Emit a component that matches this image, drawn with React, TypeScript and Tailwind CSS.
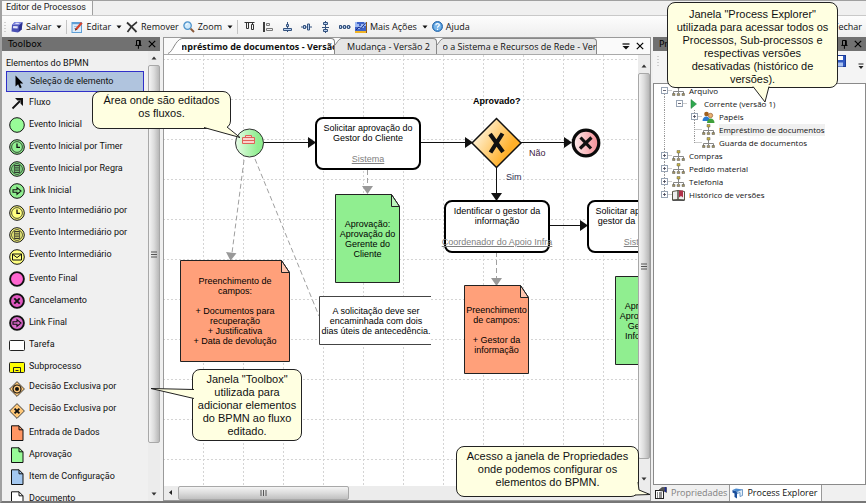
import type { ReactNode } from "react";
import clsx from "clsx";

/* ---------- small shared pieces ---------- */

const Caret = () => (
  <svg width="6" height="4" viewBox="0 0 6 4" className="shrink-0">
    <path d="M0.5 0.5h5L3 3.5z" fill="#111" />
  </svg>
);

const PinIcon = () => (
  <svg width="7" height="9" viewBox="0 0 7 9">
    <path d="M1.5 0.5h3.6v4.5M1.5 0.5v4.5M0.3 5.4h6.2M3.4 5.4v3.4" stroke="#000" fill="none" />
    <path d="M4 0.5h1.6v5H4z" fill="#000" />
  </svg>
);

const CloseIcon = () => (
  <svg width="8" height="8" viewBox="0 0 8 8">
    <path d="M0.8 0.8l6.4 6.4M7.2 0.8L0.8 7.2" stroke="#000" strokeWidth="1.2" />
  </svg>
);

const PanelHeader = ({ title }: { title: string }) => (
  <header className="flex h-3.5 shrink-0 items-center bg-[#717171] pr-1 pl-1.5">
    <h2 className="flex-1 font-['DejaVu_Sans'] text-[9px] leading-3 text-black">{title}</h2>
    <div className="flex items-center gap-1.5">
      <button aria-label={`Fixar ${title}`}>
        <PinIcon />
      </button>
      <button aria-label={`Fechar ${title}`}>
        <CloseIcon />
      </button>
    </div>
  </header>
);

const VerticalScroll = ({ thumb, className }: { thumb: string; className?: string }) => (
  <div className={clsx("flex w-3 shrink-0 flex-col items-center bg-[#ececec]", className)}>
    <svg width="6" height="14" viewBox="0 0 6 14" className="shrink-0">
      <path d="M0.5 8.5h5L3 5.5z" fill="#333" />
    </svg>
    <div
      className={clsx(
        "flex w-full items-center justify-center rounded-xs border border-[#a8a8a8] bg-linear-to-r from-[#f4f4f4] via-[#dcdcdc] to-[#b8b8b8]",
        thumb
      )}
    >
      <svg width="6" height="7" viewBox="0 0 6 7">
        <path d="M0 1h6M0 3.5h6M0 6h6" stroke="#555" />
      </svg>
    </div>
    <div className="flex-1" />
    <svg width="6" height="14" viewBox="0 0 6 14" className="shrink-0">
      <path d="M0.5 5.5h5L3 8.5z" fill="#333" />
    </svg>
  </div>
);

/* ---------- main toolbar ---------- */

const SaveIcon = () => (
  <svg width="12" height="12" viewBox="0 0 12 12">
    <path d="M3.5 1l8 0.3-0.8 7L7 11.5 0.5 10.5 1 4z" fill="#4a50b4" />
    <path d="M3.5 1l8 0.3-3.2 2.9L1 4z" fill="#8288dc" />
    <path d="M8.3 4.2l3.2-2.9-0.8 7L7.6 11.2z" fill="#2c3190" />
    <path d="M2.2 5l4.6 0.2-0.2 2.3-4.6-0.2z" fill="#e6e8fa" />
    <path d="M5 1.8l3.6 0.1-1.2 1.1-3.4-0.1z" fill="#dfe2fa" />
  </svg>
);

const EditIcon = () => (
  <svg width="12" height="12" viewBox="0 0 12 12">
    <rect x="1" y="1.5" width="9.5" height="10" fill="#dcecfa" stroke="#5f9fd6" />
    <rect x="1" y="1" width="9.5" height="2.2" fill="#5f9fd6" />
    <path d="M3 5.5h4M3 7.5h3" stroke="#9bbfe0" />
    <path d="M4 9.5l0.6-2.2L9.8 1l1.8 1.6-5.4 6.2z" fill="#d8452e" />
    <path d="M4 9.5l0.6-2.2 1.6 1.5z" fill="#5a2f1c" />
  </svg>
);

const RemoveIcon = () => (
  <svg width="12" height="12" viewBox="0 0 12 12">
    <path d="M1 1.5c3 2.6 6 6 9.5 9.5" stroke="#333" strokeWidth="1.9" fill="none" />
    <path d="M11 1C7 3.6 4 7 1.5 11" stroke="#333" strokeWidth="1.6" fill="none" />
  </svg>
);

const ZoomIcon = () => (
  <svg width="12" height="12" viewBox="0 0 12 12">
    <circle cx="4.6" cy="4.6" r="3.7" fill="#cfe9fb" stroke="#4e93cb" strokeWidth="1.3" />
    <path d="M7.6 7.6l3.4 3.4" stroke="#8a5a3a" strokeWidth="2" />
    <path d="M2.8 4.2c0.3-1 1-1.5 2-1.6" stroke="#fff" fill="none" />
  </svg>
);

const ChartIcon = () => (
  <svg width="12" height="12" viewBox="0 0 12 12">
    <rect x="0" y="1" width="12" height="9" fill="#3f63c8" />
    <path d="M0 1h2v2h2v2h2V3h3V1h3v4H9v2H6v1H3V6H0z" fill="#9db8f0" />
    <path d="M1 9l3-3 2 1.5L10.5 2" stroke="#1b2f86" fill="none" />
    <rect x="0" y="10" width="12" height="2" fill="#f0b428" />
    <path d="M11.5 1v11" stroke="#8a5a1e" />
  </svg>
);

const HelpIcon = () => (
  <svg width="11" height="11" viewBox="0 0 11 11">
    <circle cx="5.5" cy="5.5" r="5" fill="#4a92d6" stroke="#2f6cab" />
    <circle cx="5.5" cy="5.5" r="3.7" fill="#79b6ea" />
    <path d="M3.8 4.3c0-2.2 3.5-2.1 3.5-0.2 0 1.3-1.8 1.2-1.8 2.6M5.5 7.7v1.2" stroke="#fff" strokeWidth="1.2" fill="none" />
  </svg>
);

const alignTools: { label: string; icon: ReactNode }[] = [
  {
    label: "Alinhar ao topo",
    icon: <path d="M0.5 1.500h10M2.500 1.500v6h2v-6M7.500 3.500h2v5h-2zM8.500 1.500v2" stroke="#333" fill="none" />,
  },
  {
    label: "Alinhar à esquerda",
    icon: (
      <>
        <path d="M1 1v10" stroke="#111" strokeWidth="1.6" />
        <path d="M3.500 2.500h3v2h-3zM3.500 7.500h6v2h-6z" stroke="#777" fill="#eee" />
      </>
    ),
  },
  {
    label: "Centralizar na vertical",
    icon: (
      <>
        <path d="M5.500 1v10" stroke="#34527e" />
        <path d="M4.500 3.500h2v2h-2zM1.500 7.500h8v2h-8z" stroke="#34527e" fill="#b8d0f0" />
      </>
    ),
  },
  {
    label: "Centralizar na horizontal",
    icon: (
      <>
        <path d="M0 6h11" stroke="#34527e" />
        <path d="M2.500 4.500h2v3h-2zM6.500 3h2v6h-2z" stroke="#34527e" fill="#b8d0f0" />
      </>
    ),
  },
  {
    label: "Distribuir na vertical",
    icon: (
      <>
        <path d="M5.500 0v12M2 6.500h7" stroke="#34527e" />
        <path d="M3.500 1.500h4v2h-4zM3.500 8.500h4v2h-4z" stroke="#34527e" fill="#b8d0f0" />
      </>
    ),
  },
  {
    label: "Distribuir na horizontal",
    icon: (
      <>
        <path d="M0 6h12" stroke="#34527e" />
        <path d="M0.500 4.500h2v3h-2zM4.500 4.500h2v3h-2zM8.500 4.500h2v3h-2z" stroke="#34527e" fill="#b8d0f0" />
      </>
    ),
  },
];

const ToolButton = ({ icon, label, menu }: { icon: ReactNode; label: string; menu?: boolean }) => (
  <button className="flex items-center gap-[3px] whitespace-nowrap">
    {icon}
    {label}
    {menu && (
      <span className="ml-0.5">
        <Caret />
      </span>
    )}
  </button>
);

const Divider = () => <span className="h-3.5 w-px bg-[#c4c4c4]" />;

const MainToolbar = () => (
  <div className="flex h-[22px] shrink-0 items-center gap-1 border-t border-[#c9c9c9] bg-linear-to-b from-[#fdfdfd] to-[#eeeeee] pr-1 pl-0.5 font-['Open_Sans'] text-[9px] text-[#111]">
    <svg width="3" height="12" viewBox="0 0 3 12">
      <path d="M1 1v11" stroke="#aaa" strokeDasharray="1 2" />
    </svg>
    <ToolButton icon={<SaveIcon />} label="Salvar" menu />
    <Divider />
    <ToolButton icon={<EditIcon />} label="Editar" menu />
    <ToolButton icon={<RemoveIcon />} label="Remover" />
    <ToolButton icon={<ZoomIcon />} label="Zoom" menu />
    <Divider />
    <div className="flex gap-[7px] pl-0.5">
      {alignTools.map(({ label, icon }) => (
        <button key={label} aria-label={label}>
          <svg width="12" height="12" viewBox="0 0 12 12">
            {icon}
          </svg>
        </button>
      ))}
    </div>
    <ToolButton icon={<ChartIcon />} label="Mais Ações" menu />
    <ToolButton icon={<HelpIcon />} label="Ajuda" />
    <button className="ml-auto">Fechar</button>
  </div>
);

/* ---------- toolbox ---------- */

const EventIcon = ({ fill, ring, thick, children }: { fill: string; ring?: boolean; thick?: boolean; children?: ReactNode }) => (
  <>
    <circle cx="8" cy="8" r={thick ? 6.9 : 7.3} fill={fill} stroke="#111" strokeWidth={thick ? 1.9 : 1} />
    {ring && <circle cx="8" cy="8" r="5.4" fill="none" stroke="#222" strokeWidth="0.8" />}
    {children}
  </>
);

const Clock = () => <path d="M8 4.5V8.4h3" stroke="#111" strokeWidth="1.3" fill="none" />;

const Lines = () => (
  <path d="M5.3 4.5h5.4v7H5.3zM6 6.2h4M6 8h4M6 9.8h4" stroke="#222" strokeWidth="0.9" fill="none" />
);

const LinkArrow = () => (
  <path d="M4 6.7h4V4.6L12 8l-4 3.4V9.3H4z" stroke="#111" strokeWidth="1.1" fill="none" />
);

const Sheet = ({ fill }: { fill: string }) => (
  <>
    <path d="M2.5 0.8h7.5l4 4v10.7H2.5z" fill={fill} stroke="#111" />
    <path d="M10 0.8v4h4" fill="none" stroke="#111" />
  </>
);

const Rhombus = () => <path d="M8 0.6L15.4 8 8 15.4 0.6 8z" fill="#ffc878" stroke="#444" />;

type ToolItem = { label: string; icon: ReactNode; clipped?: boolean };

const tools: ToolItem[] = [
  {
    label: "Fluxo",
    icon: (
      <>
        <path d="M3.500 13.500L11 6" stroke="#111" strokeWidth="1.800" />
        <path d="M6 3h8v8l-2.500-2.500V5.500H8.500z" fill="#111" />
      </>
    ),
  },
  { label: "Evento Inicial", icon: <EventIcon fill="#98fb98" /> },
  { label: "Evento Inicial por Timer", icon: <EventIcon fill="#90ee90" ring><Clock /></EventIcon> },
  { label: "Evento Inicial por Regra", icon: <EventIcon fill="#90ee90" ring><Lines /></EventIcon> },
  { label: "Link Inicial", icon: <EventIcon fill="#90ee90"><LinkArrow /></EventIcon> },
  { label: "Evento Intermediário por", icon: <EventIcon fill="#ffff80" ring><Clock /></EventIcon>, clipped: true },
  { label: "Evento Intermediário por", icon: <EventIcon fill="#ffff80" ring><Lines /></EventIcon>, clipped: true },
  {
    label: "Evento Intermediário",
    icon: (
      <EventIcon fill="#ffff80">
        <path d="M3.500 5h9v6h-9zM3.500 5.200L8 8.600l4.500-3.400" stroke="#111" fill="none" />
      </EventIcon>
    ),
    clipped: true,
  },
  { label: "Evento Final", icon: <EventIcon fill="#ff66d0" thick /> },
  {
    label: "Cancelamento",
    icon: (
      <EventIcon fill="#e058c0" thick>
        <path d="M5.3 5.3l5.4 5.4M10.7 5.3l-5.4 5.4" stroke="#111" strokeWidth="1.9" />
      </EventIcon>
    ),
  },
  { label: "Link Final", icon: <EventIcon fill="#d868c8" thick><LinkArrow /></EventIcon> },
  { label: "Tarefa", icon: <rect x="0.5" y="3.5" width="15" height="10" rx="1" fill="#fff" stroke="#222" /> },
  {
    label: "Subprocesso",
    icon: (
      <>
        <rect x="0.500" y="3.500" width="15" height="10" rx="1" fill="#ffff00" stroke="#222" />
        <path d="M4.500 13.500v-5h7v5M6.500 11.500h3" fill="none" stroke="#222" />
      </>
    ),
  },
  {
    label: "Decisão Exclusiva por",
    icon: (
      <>
        <Rhombus />
        <circle cx="8" cy="8" r="4" fill="none" stroke="#111" strokeWidth="1.2" />
        <circle cx="8" cy="8" r="2" fill="#111" />
      </>
    ),
    clipped: true,
  },
  {
    label: "Decisão Exclusiva por",
    icon: (
      <>
        <Rhombus />
        <path d="M5.6 5.6l4.8 4.8M10.4 5.6l-4.8 4.8" stroke="#111" strokeWidth="1.9" />
      </>
    ),
    clipped: true,
  },
  { label: "Entrada de Dados", icon: <Sheet fill="#ff9664" /> },
  { label: "Aprovação", icon: <Sheet fill="#98fb98" /> },
  { label: "Item de Configuração", icon: <Sheet fill="#a4c8f0" /> },
  { label: "Documento", icon: <Sheet fill="#fff" /> },
];

const Toolbox = () => (
  <aside className="flex w-[158px] shrink-0 flex-col overflow-hidden">
    <PanelHeader title="Toolbox" />
    <div className="flex min-h-0 flex-1">
      <div className="min-w-0 flex-1 overflow-hidden pl-1 font-['Roboto'] text-[9px] text-[#111]">
        <h3 className="h-5 pt-1.5 leading-3">Elementos do BPMN</h3>
        <button className="flex h-[21px] w-[138px] items-center gap-1.5 border border-[#3030c8] bg-[#b0c4de] pl-1.5">
          <svg width="11" height="14" viewBox="0 0 11 14">
            <path d="M2.5 0.5v11l2.6-2.3 1.8 4 1.8-0.9-1.8-3.8h3.3z" fill="#000" />
          </svg>
          Seleção de elemento
        </button>
        {tools.map(({ label, icon, clipped }, i) => (
          <button key={i} className="flex h-[22px] w-full items-center gap-1 pl-[3px] whitespace-nowrap">
            <svg width="16" height="16" viewBox="0 0 16 16" className="shrink-0">
              {icon}
            </svg>
            <span className={clsx(clipped && "pb-1")}>{label}</span>
          </button>
        ))}
      </div>
      <VerticalScroll thumb="h-[378px]" />
    </div>
  </aside>
);

/* ---------- diagram ---------- */

const Task = ({ place, lines, role }: { place: string; lines: string[]; role: string }) => (
  <div
    className={clsx(
      "absolute flex h-[53px] w-[106px] flex-col items-center justify-between rounded-lg border-2 border-black bg-white pt-1 pb-1 whitespace-nowrap",
      place
    )}
  >
    <p>
      {lines.map((line) => (
        <span key={line} className="block">
          {line}
        </span>
      ))}
    </p>
    <a href="#papel" className="text-[#808080] underline">
      {role}
    </a>
  </div>
);

const Note = ({ place, lines, w, h, fill }: { place: string; lines: string[]; w: number; h: number; fill: string }) => (
  <div className={clsx("absolute", place)}>
    <svg width={w} height={h} viewBox={`0 0 ${w} ${h}`} className="absolute inset-0">
      <path d={`M0.5 0.5H${w - 8.5}L${w - 0.5} 12.5V${h - 0.5}H0.5z`} fill={fill} stroke="#222" />
      <path d={`M${w - 8.5} 0.5V12.5H${w - 0.5}z`} fill="#fff" fillOpacity="0.4" stroke="#222" />
    </svg>
    <p className="relative flex h-full flex-col items-center justify-center whitespace-nowrap">
      {lines.map((line, i) => (
        <span key={i} className="block h-2.5">
          {line}
        </span>
      ))}
    </p>
  </div>
);

const Connectors = () => (
  <svg width="473" height="431" viewBox="164 55 473 431" className="absolute top-0 left-0">
    <defs>
      <pattern id="grid" x="203" y="59" width="40" height="40" patternUnits="userSpaceOnUse">
        <path d="M0.5 0v40M0 0.5h40" stroke="#d4d4d4" strokeDasharray="2 2" />
      </pattern>
      <linearGradient id="amber" x1="0" y1="0.2" x2="1" y2="0.8">
        <stop offset="0.1" stopColor="#fff3d8" />
        <stop offset="0.75" stopColor="#ffb02a" />
      </linearGradient>
      <linearGradient id="mint">
        <stop offset="0" stopColor="#e8fbe8" />
        <stop offset="0.8" stopColor="#90ee90" />
      </linearGradient>
      <linearGradient id="rose">
        <stop offset="0" stopColor="#fdeeee" />
        <stop offset="1" stopColor="#f58c94" />
      </linearGradient>
    </defs>
    <rect x="164" y="55" width="473" height="431" fill="url(#grid)" />
    <g stroke="#111" fill="none">
      <path d="M264 142.5h44M420 142.5h46M520 142.5h45M496.5 167v27M549 225.5h32" />
    </g>
    <g fill="#111">
      <path d="M308 137v11l8-5.5zM465 137v11l8-5.5zM564 137v11l8-5.5zM491 193h11l-5.5 8zM580 220v11l8-5.5z" />
    </g>
    <g stroke="#a0a0a0" fill="none" strokeDasharray="5 3">
      <path d="M244 160L232 253M255 159L319 316M367.5 170v17M496.5 252v27" />
    </g>
    <g fill="#999">
      <path d="M226 252l10.5 1.2-6 7.5zM362 186h11l-5.5 8zM491 278h11l-5.5 8z" />
    </g>
    <circle cx="249.5" cy="143" r="14" fill="url(#mint)" stroke="#333" />
    <path d="M242.500 137.500h12v6h-12zM245.500 137.500v-2h6v2M242.500 140.500h12" stroke="#e06058" fill="#fbd0cc" />
    <path d="M496.5 118.5L521 143l-24.5 24.5L472 143z" fill="url(#amber)" stroke="#111" strokeWidth="1.5" />
    <path d="M490 134l13 18M502.5 133.5l-12 19" stroke="#111" strokeWidth="4.2" />
    <circle cx="586" cy="143" r="12.8" fill="url(#rose)" stroke="#0a0a0a" strokeWidth="3.2" />
    <path d="M580.5 137.5l10.5 11M591.5 137.5l-11.5 11" stroke="#111" strokeWidth="3.2" />
    <path d="M431 296.5H319.5v48H431" fill="#fff" stroke="#444" />
  </svg>
);

const Diagram = () => (
  <div className="relative min-w-0 flex-1 overflow-hidden bg-white text-center font-['Liberation_Sans'] text-[9px] leading-2.5 text-black">
    <Connectors />
    <strong className="absolute top-[41px] left-[309px]">Aprovado?</strong>
    <span className="absolute top-[93px] left-[365px] text-[#402040]">Não</span>
    <span className="absolute top-[117px] left-[342px] text-[#303050]">Sim</span>
    <Task place="left-[151px] top-[62px]" lines={["Solicitar aprovação do", "Gestor do Cliente"]} role="Sistema" />
    <Task place="left-[280px] top-[145px]" lines={["Identificar o gestor da", "informação"]} role="Coordenador do Apoio Infra" />
    <Task place="left-[423px] top-[145px]" lines={["Solicitar aprovação do", "gestor da informação"]} role="Sistema" />
    <Note
      place="left-[171px] top-[139px] h-[89px] w-[65px]"
      w={65}
      h={89}
      fill="#90ee90"
      lines={["Aprovação:", "Aprovação do", "Gerente do", "Cliente"]}
    />
    <Note
      place="left-[16px] top-[205px] h-[102px] w-[110px]"
      w={110}
      h={102}
      fill="#ffa07a"
      lines={["Preenchimento de", "campos:", "", "+ Documentos para", "recuperação", "+ Justificativa", "+ Data de devolução"]}
    />
    <Note
      place="left-[300px] top-[230px] h-[89px] w-[65px]"
      w={65}
      h={89}
      fill="#ffa07a"
      lines={["Preenchimento", "de campos:", "", "+ Gestor da", "informação"]}
    />
    <Note
      place="left-[451px] top-[221px] h-[89px] w-[65px]"
      w={65}
      h={89}
      fill="#90ee90"
      lines={["Aprovação:", "Aprovação do", "Gestor da", "Informação"]}
    />
    <p className="absolute top-[251px] left-[155px] w-[114px] whitespace-nowrap">
      A solicitação deve ser
      <br />
      encaminhada com dois
      <br />
      dias úteis de antecedência.
    </p>
  </div>
);

const DocTab = ({ width, active, children }: { width: string; active?: boolean; children: ReactNode }) => (
  <button className={clsx("flex h-4 shrink-0 overflow-hidden", width)}>
    {active ? (
      <svg width="14" height="16" viewBox="0 0 14 16" className="shrink-0">
        <path d="M0 16C5 14 7 2 14 0.5V16z" fill="#fff" />
        <path d="M0 15.500C5 14 7 2 14 0.500" fill="none" stroke="#888" />
      </svg>
    ) : (
      <svg width="6" height="16" viewBox="0 0 6 16" className="shrink-0">
        <path d="M0 6L6 0.500V16H0z" fill="#e6e6e6" />
        <path d="M0 7C2 5 3 1.500 6 0.500" fill="none" stroke="#888" />
      </svg>
    )}
    <span
      className={clsx(
        "flex h-full min-w-0 flex-1 items-center justify-center overflow-hidden rounded-tr-sm border-t border-r border-[#888] whitespace-nowrap",
        active ? "bg-white font-bold" : "bg-[#e6e6e6]"
      )}
    >
      {children}
    </span>
  </button>
);

const Workspace = () => (
  <main className="flex min-w-0 flex-1 flex-col border border-[#9a9a9a]">
    <div className="flex h-[17px] shrink-0 items-end border-b border-[#aaa] bg-[#fafafa] pl-1 font-['Open_Sans'] text-[9px] text-[#111]">
      <DocTab width="w-[167px]" active>
        mpréstimo de documentos - Versão
      </DocTab>
      <DocTab width="w-[102px]">Mudança - Versão 2</DocTab>
      <DocTab width="w-[160px]">o a Sistema e Recursos de Rede - Ver</DocTab>
      <div className="ml-auto flex h-4 items-center gap-1.5 pr-1.5">
        <button aria-label="Lista de abas">
          <svg width="8" height="7" viewBox="0 0 8 7">
            <path d="M0.5 1h7" stroke="#111" strokeWidth="1.3" />
            <path d="M0.5 3h7L4 6.5z" fill="#111" />
          </svg>
        </button>
        <button aria-label="Fechar aba">
          <CloseIcon />
        </button>
      </div>
    </div>
    <div className="flex min-h-0 flex-1">
      <Diagram />
      <VerticalScroll thumb="h-[386px]" className="pt-1" />
    </div>
    <div className="flex h-3.5 shrink-0 bg-[#ececec]">
      <svg width="14" height="14" viewBox="0 0 14 14">
        <path d="M8 4v5L5 6.5z" fill="#222" />
      </svg>
      <div className="flex w-[171px] items-center justify-center rounded-xs border border-[#a8a8a8] bg-linear-to-b from-[#f4f4f4] via-[#dcdcdc] to-[#c0c0c0]">
        <svg width="7" height="6" viewBox="0 0 7 6">
          <path d="M1 0v6M3.5 0v6M6 0v6" stroke="#555" />
        </svg>
      </div>
    </div>
  </main>
);

/* ---------- process explorer ---------- */

const FlowIcon = () => (
  <>
    <path d="M6.500 3v5M1.500 9V6.500h10V9" stroke="#888" fill="none" />
    <path d="M5 0.500h3v2.500H5z" fill="#c8b040" stroke="#665" strokeWidth="0.500" />
    <path d="M0.500 8.500h2.500v2H0.500zM5.200 8.500h2.500v2H5.200zM10 8.500h2.500v2H10z" fill="#a89860" stroke="#555" strokeWidth="0.500" />
  </>
);

const PlayIcon = () => <path d="M4 1.5l5.5 4.5L4 10.5z" fill="#2fa84f" stroke="#1c7a35" strokeWidth="0.5" />;

const PeopleIcon = () => (
  <>
    <circle cx="4.5" cy="3" r="2.3" fill="#a0601c" />
    <path d="M0.5 10c0-6 7.5-6 7.5 0z" fill="#2a7ad0" />
    <circle cx="8.5" cy="4.5" r="2.2" fill="#e8b070" stroke="#8a4a1c" strokeWidth="0.6" />
    <path d="M5 12c0-6 7.5-6 7.5 0z" fill="#3fa03c" />
  </>
);

const BookIcon = () => (
  <>
    <path d="M0.5 2.5L6 1.5v9l-5.5 0.5zM12.5 2.5L6 1.5v9l6.5 0.5z" fill="#eee" stroke="#554" />
    <path d="M7 1.5h4v7l-2-1.5-2 1.5z" fill="#b03048" />
    <path d="M0.5 11.3h12" stroke="#333" />
  </>
);

const Guide = ({ d }: { d: string }) => (
  <svg width="15" height="13" viewBox="0 0 15 13" className="shrink-0">
    <path d={d} stroke="#999" fill="none" strokeDasharray="1 1" />
  </svg>
);

const Expander = ({ open, first, last }: { open?: boolean; first?: boolean; last?: boolean }) => (
  <svg width="15" height="13" viewBox="0 0 15 13" className="shrink-0">
    <path d={`M7.5 ${first ? 6 : 0}V${last ? 6 : 13}M7.5 6.5H15`} stroke="#999" fill="none" strokeDasharray="1 1" />
    <rect x="4.500" y="3.500" width="6" height="6" fill="#fff" stroke="#98a4b4" />
    <path d={open ? "M6 6.500h3" : "M6 6.500h3M7.500 5v3"} stroke="#445" strokeWidth="0.800" />
  </svg>
);

const through = "M7.5 0v13";
const tee = "M7.5 0v13M7.5 6.5H15";
const elbow = "M7.5 0v7M7.5 6.5H15";

const treeRows: { label: string; icon: ReactNode; cells: ReactNode; selected?: boolean }[] = [
  { label: "Arquivo", icon: <FlowIcon />, cells: <Expander open first /> },
  { label: "Corrente (versão 1)", icon: <PlayIcon />, cells: <><Guide d={through} /><Expander open first last /></> },
  { label: "Papéis", icon: <PeopleIcon />, cells: <><Guide d={through} /><Guide d="" /><Expander /></> },
  { label: "Empréstimo de documentos", icon: <FlowIcon />, cells: <><Guide d={through} /><Guide d="" /><Guide d={tee} /></>, selected: true },
  { label: "Guarda de documentos", icon: <FlowIcon />, cells: <><Guide d={through} /><Guide d="" /><Guide d={elbow} /></> },
  { label: "Compras", icon: <FlowIcon />, cells: <Expander /> },
  { label: "Pedido material", icon: <FlowIcon />, cells: <Expander /> },
  { label: "Telefonia", icon: <FlowIcon />, cells: <Expander /> },
  { label: "Histórico de versões", icon: <BookIcon />, cells: <Expander last /> },
];

const ProcessExplorer = () => (
  <aside className="flex w-[213px] shrink-0 flex-col">
    <PanelHeader title="Process Explorer" />
    <div className="flex h-8 shrink-0 items-start gap-2 bg-[#f4f4f4] pt-1 pr-0.5 pl-1">
      <svg width="3" height="12" viewBox="0 0 3 12">
        <path d="M1 1v11" stroke="#aaa" strokeDasharray="1 2" />
      </svg>
      <button aria-label="Atualizar">
        <svg width="10" height="12" viewBox="0 0 12 12">
          <path d="M10 3.5A4.5 4.5 0 1 0 10.5 7M10.5 1v3h-3" stroke="#2a5aa8" strokeWidth="1.5" fill="none" />
        </svg>
      </button>
      <button aria-label="Salvar processo" className="ml-auto">
        <svg width="12" height="12" viewBox="0 0 12 12">
          <rect x="0.5" y="0.5" width="11" height="11" fill="#3058c0" stroke="#1c3c98" />
          <rect x="3" y="1" width="6" height="4" fill="#fff" />
          <rect x="3" y="7.5" width="6" height="4" fill="#a8c0f0" />
        </svg>
      </button>
      <button aria-label="Mais opções" className="ml-1 pt-2">
        <svg width="6" height="7" viewBox="0 0 6 7">
          <path d="M0.5 1h5" stroke="#222" />
          <path d="M0.5 3h5L3 6z" fill="#222" />
        </svg>
      </button>
    </div>
    <div className="min-h-0 flex-1 border border-[#8a8a8a] bg-white pl-[3px] font-['Open_Sans'] text-[8px] text-[#111]">
      <ul>
        {treeRows.map(({ label, icon, cells, selected }) => (
          <li key={label} className="flex h-[13px] items-center whitespace-nowrap">
            {cells}
            <svg width="13" height="12" viewBox="0 0 13 12" className="mr-1 shrink-0">
              {icon}
            </svg>
            <span className={clsx("leading-3", selected && "bg-[#f0f0f0]")}>{label}</span>
          </li>
        ))}
      </ul>
    </div>
    <div className="flex h-4 shrink-0 font-['Open_Sans'] text-[9px]">
      <button className="flex items-center gap-1 px-0.5 text-[#808080]">
        <svg width="12" height="12" viewBox="0 0 12 12">
          <rect x="0.5" y="3.5" width="8" height="8" fill="#fff" stroke="#222" />
          <path d="M2 6h1M4 6h3M2 8h1M4 8h3M2 10h1M4 10h3" stroke="#222" />
          <path d="M4 3l3-2.5h4.5v5L9 4H6z" fill="#555" stroke="#222" strokeWidth="0.5" />
          <path d="M10.5 0v5" stroke="#1c2c98" strokeWidth="1.5" />
        </svg>
        Propriedades
      </button>
      <button className="flex items-center gap-1 border-r border-l border-[#999] bg-white pr-1 pl-0.5 text-[#111]">
        <svg width="11" height="11" viewBox="0 0 11 11">
          <path d="M0.5 2L5 3.5v7L2.5 9V5.5L0.5 4.5z" fill="#1b4f9c" />
          <path d="M0.5 2L4 0.5 10.5 1.5 5 3.5z" fill="#4a8ad0" />
          <path d="M5 3.5l5.5-2v6L8 8.5v-4L5 5.5z" fill="#e4f0fa" stroke="#3f78b8" strokeWidth="0.7" />
        </svg>
        Process Explorer
      </button>
    </div>
  </aside>
);

/* ---------- help balloons ---------- */

const Balloon = ({ place, tail, tailPlace, size, children }: { place: string; tail: string; tailPlace: string; size: [number, number]; children: ReactNode }) => (
  <div
    className={clsx(
      "absolute z-10 rounded-lg border border-[#222] bg-[#ffffe1] text-center font-['Liberation_Sans'] text-[11px] leading-[13px] whitespace-nowrap text-[#111]",
      place
    )}
  >
    {children}
    <svg width={size[0]} height={size[1]} viewBox={`0 0 ${size[0]} ${size[1]}`} className={clsx("absolute", tailPlace)}>
      <path d={tail} fill="#ffffe1" stroke="#222" />
    </svg>
  </div>
);

export default function App() {
  return (
    <div className="relative flex h-screen flex-col overflow-hidden border-t border-b-2 border-l-2 border-[#a0a0a0] border-b-[#777] bg-[#f0f0f0]">
      <nav className="flex h-3.5 shrink-0 font-['Roboto'] text-[9px] leading-3 text-[#222]">
        <a href="#editor" className="border-r border-[#a0a0a0] bg-[#f8f8f8] pr-1.5 pl-1">
          Editor de Processos
        </a>
      </nav>
      <MainToolbar />
      <div className="flex min-h-0 flex-1">
        <Toolbox />
        <div className="flex min-w-0 flex-1 pr-0.5 pl-[3px]">
          <Workspace />
        </div>
        <ProcessExplorer />
      </div>

      <Balloon
        place="top-[90px] left-[90px] h-[38px] w-[139px] pt-0.5"
        size={[38, 12]}
        tailPlace="top-[35px] left-[111px]"
        tail="M0 0.5L36 10.5L23 0"
      >
        Área onde são editados
        <br />
        os fluxos.
      </Balloon>
      <Balloon
        place="top-[368px] left-[190px] h-[72px] w-[110px] pt-[3px]"
        size={[43, 12]}
        tailPlace="top-[18px] -left-[42px]"
        tail="M43 1.5L0 0.5L43 10.5"
      >
        Janela "Toolbox"
        <br />
        utilizada para
        <br />
        adicionar elementos
        <br />
        do BPMN ao fluxo
        <br />
        editado.
      </Balloon>
      <Balloon
        place="top-[1px] right-[28px] h-[86px] w-[171px] pt-[5px]"
        size={[20, 18]}
        tailPlace="top-[83px] left-[84px]"
        tail="M1 0.5L13 16L17 0.5"
      >
        Janela "Process Explorer"
        <br />
        utilizada para acessar todos os
        <br />
        Processos, Sub-processos e
        <br />
        respectivas versões
        <br />
        desativadas (histórico de
        <br />
        versões).
      </Balloon>
      <Balloon
        place="bottom-1 left-[454px] h-[51px] w-[183px] pt-[3px]"
        size={[16, 14]}
        tailPlace="bottom-0 left-[178px]"
        tail="M3 0L4 8L15 12.5L0 13"
      >
        Acesso a janela de Propriedades
        <br />
        onde podemos configurar os
        <br />
        elementos do BPMN.
      </Balloon>
    </div>
  );
}
